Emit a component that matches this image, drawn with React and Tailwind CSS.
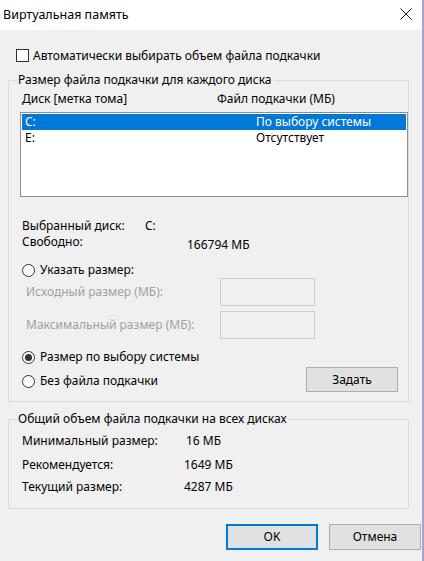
import React from "react";

const font = "font-['Noto_Sans','DejaVu_Sans',sans-serif]";

const Radio = ({ checked }) => (
  <span className="w-[13px] h-[13px] rounded-full border border-[#333333] bg-white flex items-center justify-center shrink-0">
    {checked && <span className="w-[7px] h-[7px] rounded-full bg-[#333333]" />}
  </span>
);

const Button = ({ children, primary, className = "" }) => (
  <button
    className={`h-[26px] w-[92px] bg-[#e1e1e1] text-[12px] leading-[16px] text-black ${
      primary ? "border-2 border-[#0078d7]" : "border border-[#adadad]"
    } ${className}`}
  >
    {children}
  </button>
);

const Row = ({ label, value, width }) => (
  <div className="flex h-[16px] items-center pl-[2px]">
    <span className={width}>{label}</span>
    <span>{value}</span>
  </div>
);

const drives = [
  { drive: "C:", size: "По выбору системы", selected: true },
  { drive: "E:", size: "Отсутствует", selected: false },
];

export default function App() {
  return (
    <div className={`w-[424px] h-[561px] bg-[#f0f0f0] text-black text-[12px] leading-[16px] border-r-2 border-[#a3a5cc] ${font}`}>
      {/* title bar */}
      <div className="h-[30px] bg-white flex items-center justify-between pl-[3px] pr-[10px]">
        <span className="text-[12.5px]">Виртуальная память</span>
        <svg width="12" height="12" viewBox="0 0 12 12" className="mt-[-2px]">
          <path d="M0.5 0.5 L11.5 11.5 M11.5 0.5 L0.5 11.5" stroke="#222" strokeWidth="1" />
        </svg>
      </div>

      <div className="pl-[8px]">
        {/* auto checkbox */}
        <div className="mt-[19px] flex items-center h-[13px] pl-[8px]">
          <span className="w-[13px] h-[13px] border border-[#333333] bg-white shrink-0" />
          <span className="ml-[4px]">Автоматически выбирать объем файла подкачки</span>
        </div>

        {/* per-disk group */}
        <fieldset className="mt-[10px] w-[401px] border border-[#dcdcdc] pl-[11px] pb-[9px]">
          <legend className="ml-[-3px] px-[1px] leading-[16px]">Размер файла подкачки для каждого диска</legend>

          <div className="mt-[3px] flex h-[16px] pl-[2px]">
            <span className="w-[195px]">Диск [метка тома]</span>
            <span>Файл подкачки (МБ)</span>
          </div>

          <div className="mt-[5px] h-[85px] border border-[#8f8f8f] bg-white p-[1px]">
            {drives.map((d) => (
              <div
                key={d.drive}
                className={`flex h-[16px] items-center pl-[3px] ${d.selected ? "bg-[#0078d7] text-white" : ""}`}
              >
                <span className="w-[231px]">{d.drive}</span>
                <span>{d.size}</span>
              </div>
            ))}
          </div>

          <div className="mt-[21px]">
            <Row label="Выбранный диск:" value="C:" width="w-[123px]" />
            <div className="flex h-[16px] pl-[2px]">
              <span className="w-[165px]">Свободно:</span>
              <span className="mt-[3px]">166794 МБ</span>
            </div>
          </div>

          <div className="mt-[12px] flex items-center h-[16px] pl-[2px] gap-[5px]">
            <Radio />
            <span>Указать размер:</span>
          </div>

          <div className="flex items-center h-[28px] pl-[6px] text-[#a0a0a0]">
            <span className="w-[194px]">Исходный размер (МБ):</span>
            <span className="w-[95px] h-[28px] border border-[#cccccc] bg-[#f0f0f0]" />
          </div>
          <div className="mt-[5px] flex items-center h-[28px] pl-[6px] text-[#a0a0a0]">
            <span className="w-[194px]">Максимальный размер (МБ):</span>
            <span className="w-[95px] h-[28px] border border-[#cccccc] bg-[#f0f0f0]" />
          </div>

          <div className="mt-[10px] flex items-center h-[16px] pl-[2px] gap-[5px]">
            <Radio checked />
            <span>Размер по выбору системы</span>
          </div>
          <div className="mt-[2px] flex items-center">
            <div className="flex items-center h-[16px] pl-[2px] gap-[5px] pt-[3px]">
              <Radio />
              <span>Без файла подкачки</span>
            </div>
            <button className="ml-auto mr-[10px] h-[25px] w-[92px] bg-[#e1e1e1] border border-[#adadad]">
              Задать
            </button>
          </div>
        </fieldset>

        {/* totals group */}
        <fieldset className="mt-[9px] w-[401px] border border-[#dcdcdc] pl-[11px] pb-[13px]">
          <legend className="ml-[-3px] px-[1px] leading-[16px]">Общий объем файла подкачки на всех дисках</legend>
          <div className="mt-[6px]">
            <Row label="Минимальный размер:" value="16 МБ" width="w-[164px]" />
          </div>
          <div className="mt-[8px]">
            <Row label="Рекомендуется:" value="1649 МБ" width="w-[162px]" />
          </div>
          <div className="mt-[6px]">
            <Row label="Текущий размер:" value="4287 МБ" width="w-[162px]" />
          </div>
        </fieldset>

        <div className="mt-[15px] flex justify-end gap-[11px] pr-[1px]">
          <Button primary>OK</Button>
          <Button>Отмена</Button>
        </div>
      </div>
    </div>
  );
}
